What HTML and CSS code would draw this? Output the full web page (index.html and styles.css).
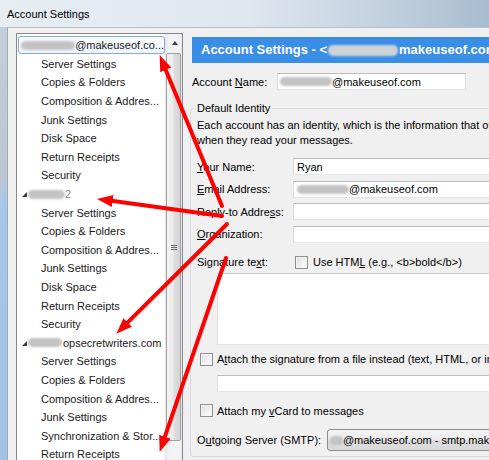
FILE: index.html
```html
<!DOCTYPE html>
<html>
<head>
<meta charset="utf-8">
<title>Account Settings</title>
<link rel="stylesheet" href="styles.css">
</head>
<body>
<div class="window">
  <div class="titlebar">Account Settings</div>
  <div class="frame">
    <div class="frame-edge"></div>
    <div class="client">
      <div class="tree">
        <div class="tree-items">
          <div class="row account"><span class="sel"><span class="blob blob-acc1"></span>@makeuseof.co...</span></div>
          <div class="row child">Server Settings</div>
          <div class="row child">Copies &amp; Folders</div>
          <div class="row child">Composition &amp; Addres...</div>
          <div class="row child">Junk Settings</div>
          <div class="row child">Disk Space</div>
          <div class="row child">Return Receipts</div>
          <div class="row child">Security</div>
          <div class="row account"><span class="twisty"></span><span class="blob blob-acc2"></span><span class="faint">2</span></div>
          <div class="row child">Server Settings</div>
          <div class="row child">Copies &amp; Folders</div>
          <div class="row child">Composition &amp; Addres...</div>
          <div class="row child">Junk Settings</div>
          <div class="row child">Disk Space</div>
          <div class="row child">Return Receipts</div>
          <div class="row child">Security</div>
          <div class="row account"><span class="twisty"></span><span class="blob blob-acc3"></span>opsecretwriters.com</div>
          <div class="row child">Server Settings</div>
          <div class="row child">Copies &amp; Folders</div>
          <div class="row child">Composition &amp; Addres...</div>
          <div class="row child">Junk Settings</div>
          <div class="row child">Synchronization &amp; Stor...</div>
          <div class="row child">Return Receipts</div>
        </div>
        <div class="vscroll">
          <div class="sb-up"><span class="sb-arrow"></span></div>
          <div class="sb-thumb"><span class="grip"></span></div>
        </div>
      </div>

      <div class="pane">
        <div class="banner">Account Settings - &lt;<span class="blob blob-banner"></span>makeuseof.com&gt;</div>
        <div class="acct-row">
          <span class="acct-label">Account <u>N</u>ame:</span>
          <span class="textbox acct-box"><span class="blob blob-name"></span>@makeuseof.com</span>
        </div>

        <fieldset class="group">
          <legend class="group-title">Default Identity</legend>
          <p class="intro">Each account has an identity, which is the information that other people see<br>when they read your messages.</p>

          <div class="field-row first">
            <span class="field-label"><u>Y</u>our Name:</span>
            <span class="textbox field-box">Ryan</span>
          </div>
          <div class="field-row">
            <span class="field-label"><u>E</u>mail Address:</span>
            <span class="textbox field-box"><span class="blob blob-email"></span>@makeuseof.com</span>
          </div>
          <div class="field-row">
            <span class="field-label">Reply-to Addre<u>s</u>s:</span>
            <span class="textbox field-box"></span>
          </div>
          <div class="field-row">
            <span class="field-label"><u>O</u>rganization:</span>
            <span class="textbox field-box"></span>
          </div>

          <div class="sig-row">
            <span class="sig-label">Signature te<u>x</u>t:</span>
            <span class="check"></span>
            <span>Use HTM<u>L</u> (e.g., &lt;b&gt;bold&lt;/b&gt;)</span>
          </div>
          <div class="textarea"></div>

          <div class="check-row attach">
            <span class="check"></span>
            <span>A<u>t</u>tach the signature from a file instead (text, HTML, or image):</span>
          </div>
          <div class="textbox file-box"></div>

          <div class="check-row vcard">
            <span class="check"></span>
            <span>Attach my <u>v</u>Card to messages</span>
          </div>

          <div class="smtp-row">
            <span class="smtp-label">O<u>u</u>tgoing Server (SMTP):</span>
            <span class="combo"><span class="blob blob-smtp"></span>@makeuseof.com - smtp.makeuseof.com</span>
          </div>
        </fieldset>
      </div>
    </div>
  </div>

  <svg class="arrows" width="489" height="460" viewBox="0 0 489 460" xmlns="http://www.w3.org/2000/svg">
    <defs>
      <marker id="head" markerUnits="userSpaceOnUse" markerWidth="16" markerHeight="12" refX="7" refY="6" orient="auto" viewBox="0 0 16 12">
        <path d="M0,0 L16,6 L0,12 Z" fill="#ff0000"/>
      </marker>
    </defs>
    <g stroke="#ff0000" stroke-width="4" fill="none" stroke-linecap="round">
      <line x1="222" y1="206" x2="163.1" y2="63.4" marker-end="url(#head)"/>
      <line x1="222" y1="216" x2="105.9" y2="200.1" marker-end="url(#head)"/>
      <line x1="227" y1="224" x2="122.7" y2="327.4" marker-end="url(#head)"/>
      <line x1="226" y1="258" x2="162.6" y2="443.4" marker-end="url(#head)"/>
    </g>
  </svg>
</div>
</body>
</html>
```

FILE: styles.css
```css
html, body {
  margin: 0;
  padding: 0;
}

body {
  width: 489px;
  height: 460px;
  overflow: hidden;
  font-family: "Liberation Sans", Arial, sans-serif;
  font-size: 11px;
  color: #000;
  background: #f0f0f0;
}

.window {
  position: relative;
  display: flex;
  flex-direction: column;
  width: 489px;
  height: 460px;
  overflow: hidden;
}

.titlebar {
  flex: none;
  height: 27px;
  padding-left: 7px;
  line-height: 28px;
  color: #000;
  background: linear-gradient(90deg, #e7edf3 0%, #dfe7ef 50%, #c3d1df 78%, #a8bcd0 100%);
}

.frame {
  flex: 1;
  display: flex;
  min-height: 0;
}

.frame-edge {
  flex: none;
  width: 7px;
  background: linear-gradient(180deg, #c4ced8 0%, #bac6d2 36%, #a9c7e7 40%, #a2c2e4 100%);
}

.client {
  flex: 1;
  min-width: 0;
  display: flex;
  align-items: flex-start;
  background: #f0f0f0;
  border-top: 1px solid #b7c1cc;
  border-left: 1px solid #9eabba;
  padding: 5px 0 0 8px;
}

/* ---------- tree ---------- */
.tree {
  flex: none;
  display: flex;
  width: 165px;
  height: 440px;
  border: 1px solid #828790;
  background: #fff;
}

.tree-items {
  flex: 1;
  min-width: 0;
  padding-top: 2px;
}

.row {
  display: flex;
  align-items: center;
  height: 18.6px;
  white-space: nowrap;
  color: #1a1a1a;
}

.child {
  padding-left: 24px;
}

.account {
  padding-left: 5px;
}

.sel {
  display: flex;
  align-items: center;
  box-sizing: border-box;
  height: 18px;
  width: 147px;
  margin-left: -4px;
  padding-left: 2px;
  border: 1px solid #86a9d6;
  border-radius: 3px;
  background: linear-gradient(180deg, #fafcff 0%, #eef5fd 100%);
}

.twisty {
  width: 0;
  height: 0;
  border-left: 5px solid transparent;
  border-bottom: 5px solid #3a3a3a;
  margin-right: 1px;
  margin-top: 1px;
}

.blob {
  display: inline-block;
  height: 9px;
  border-radius: 5px;
  background: #c3c3c3;
  filter: blur(1.2px);
}

.blob-acc1 { width: 56px; }
.blob-acc2 { width: 37px; }
.blob-acc3 { width: 34px; margin-right: 1px; }
.blob-banner { width: 70px; background: #cfd3d8; height: 11px; margin: 0 1px; }
.blob-name { width: 52px; }
.blob-email { width: 52px; }
.blob-smtp { width: 52px; }

.faint {
  color: #8a8a8a;
}

.vscroll {
  flex: none;
  width: 17px;
  display: flex;
  flex-direction: column;
  align-items: center;
  background: linear-gradient(90deg, #e6e6e6 0%, #f2f2f2 20%, #f3f3f3 80%, #e9e9e9 100%);
}

.sb-up {
  display: flex;
  align-items: center;
  justify-content: center;
  width: 17px;
  height: 17px;
}

.sb-arrow {
  width: 0;
  height: 0;
  border-left: 3.5px solid transparent;
  border-right: 3.5px solid transparent;
  border-bottom: 4px solid #404040;
  margin-left: 2px;
}

.sb-thumb {
  box-sizing: border-box;
  width: 15px;
  height: 388px;
  margin-top: 2px;
  border: 1px solid #a0a0a0;
  border-radius: 2px;
  background: linear-gradient(90deg, #f4f4f4 0%, #ececec 45%, #dedede 55%, #d3d3d3 100%);
  display: flex;
  align-items: center;
  justify-content: center;
}

.grip {
  width: 6px;
  height: 5px;
  background: repeating-linear-gradient(180deg, #6d6d6d 0, #6d6d6d 1px, transparent 1px, transparent 2px);
}

/* ---------- right pane ---------- */
.pane {
  flex: none;
  width: 340px;
  margin-left: 7px;
  padding-top: 4px;
}

.banner {
  height: 26px;
  margin-left: 2px;
  padding-left: 9px;
  line-height: 26px;
  background: #3a8ee6;
  color: #fff;
  font-weight: bold;
  font-size: 13px;
  white-space: nowrap;
  display: flex;
  align-items: center;
}

.acct-row {
  display: flex;
  align-items: center;
  margin: 10px 0 0 2px;
  height: 17px;
}

.acct-label {
  width: 85px;
  flex: none;
}

.textbox {
  box-sizing: border-box;
  display: flex;
  align-items: center;
  height: 17px;
  padding-left: 2px;
  background: #fff;
  border: 1px solid;
  border-color: #b9bcc2 #dadde2 #e2e5ea #dadde2;
  white-space: nowrap;
  overflow: hidden;
}

.acct-box {
  width: 189px;
}

.group {
  margin: 11px 0 0 0;
  padding: 0 6px 5px 6px;
  border: 1px solid #d5dbe0;
  border-radius: 3px;
  min-width: 0;
}

.group-title {
  padding: 0 2px;
  margin-left: -2px;
  line-height: 14px;
}

.intro {
  margin: 2.5px 0 0 0;
  line-height: 15px;
  white-space: nowrap;
}

.field-row {
  display: flex;
  align-items: center;
  height: 17px;
  margin-top: 5.5px;
}

.field-row.first {
  margin-top: 10.5px;
}

.field-label {
  width: 96px;
  flex: none;
  white-space: nowrap;
}

.field-box {
  flex: none;
  width: 240px;
  padding-left: 3px;
}

.sig-row {
  display: flex;
  align-items: center;
  height: 17px;
  margin-top: 11px;
  white-space: nowrap;
}

.sig-label {
  width: 98px;
  flex: none;
}

.check {
  box-sizing: border-box;
  flex: none;
  width: 13px;
  height: 13px;
  margin-right: 5px;
  border: 1px solid #8f8f8f;
  background: linear-gradient(135deg, #dedede 0%, #f2f2f2 60%, #fbfbfb 100%);
  box-shadow: inset 0 0 0 1px #f4f4f4;
}

.textarea {
  box-sizing: border-box;
  height: 72px;
  width: 300px;
  margin: 2.5px 0 0 20px;
  background: #fff;
  border: 1px solid;
  border-color: #c6c9ce #dadde2 #e2e5ea #dadde2;
}

.check-row {
  display: flex;
  align-items: center;
  height: 17px;
  padding-left: 3px;
  white-space: nowrap;
}

.check-row .check {
  margin-right: 4px;
}

.attach {
  margin-top: 5.5px;
}

.file-box {
  width: 300px;
  margin: 7.5px 0 0 20px;
}

.vcard {
  margin-top: 10px;
}

.smtp-row {
  display: flex;
  align-items: center;
  height: 22px;
  margin-top: 10px;
  white-space: nowrap;
}

.smtp-label {
  width: 130px;
  flex: none;
}

.combo {
  box-sizing: border-box;
  flex: none;
  display: flex;
  align-items: center;
  width: 220px;
  height: 22px;
  padding-left: 2px;
  border: 1px solid #8e8f8f;
  border-radius: 3px;
  background: linear-gradient(180deg, #f4f4f4 0%, #ebebeb 50%, #dedede 51%, #d8d8d8 100%);
  overflow: hidden;
}

.arrows {
  position: absolute;
  left: 0;
  top: 0;
  pointer-events: none;
}
```
